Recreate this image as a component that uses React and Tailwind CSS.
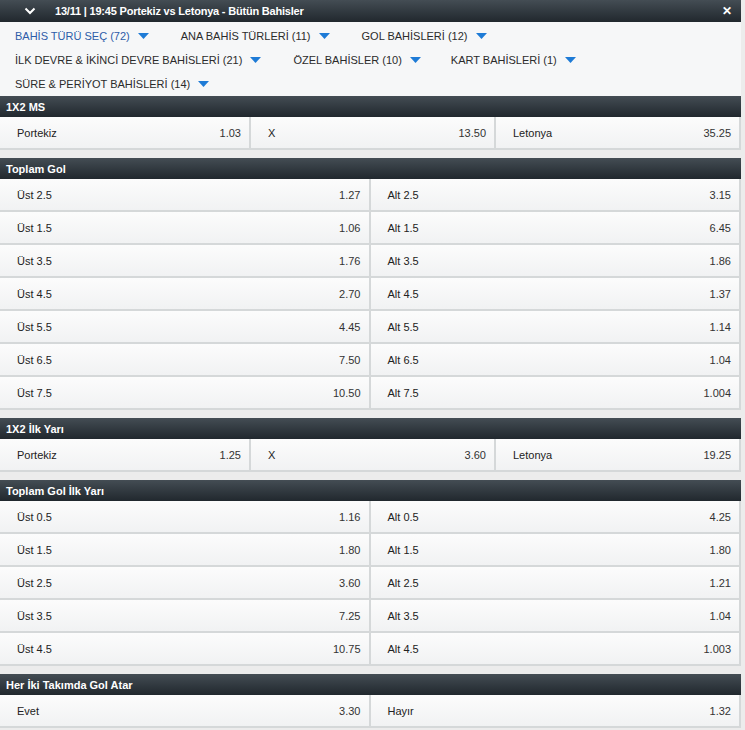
import React from "react";

const filters = [
  { t: "BAHİS TÜRÜ SEÇ (72)", active: true },
  { t: "ANA BAHİS TÜRLERİ (11)" },
  { t: "GOL BAHİSLERİ (12)" },
  { t: "İLK DEVRE & İKİNCİ DEVRE BAHİSLERİ (21)" },
  { t: "ÖZEL BAHİSLER (10)" },
  { t: "KART BAHİSLERİ (1)" },
  { t: "SÜRE & PERİYOT BAHİSLERİ (14)" },
];

const sections = [
  { title: "1X2 MS", cols: 3, cells: [["Portekiz", "1.03"], ["X", "13.50"], ["Letonya", "35.25"]] },
  {
    title: "Toplam Gol",
    cols: 2,
    cells: [
      ["Üst 2.5", "1.27"], ["Alt 2.5", "3.15"],
      ["Üst 1.5", "1.06"], ["Alt 1.5", "6.45"],
      ["Üst 3.5", "1.76"], ["Alt 3.5", "1.86"],
      ["Üst 4.5", "2.70"], ["Alt 4.5", "1.37"],
      ["Üst 5.5", "4.45"], ["Alt 5.5", "1.14"],
      ["Üst 6.5", "7.50"], ["Alt 6.5", "1.04"],
      ["Üst 7.5", "10.50"], ["Alt 7.5", "1.004"],
    ],
  },
  { title: "1X2 İlk Yarı", cols: 3, cells: [["Portekiz", "1.25"], ["X", "3.60"], ["Letonya", "19.25"]] },
  {
    title: "Toplam Gol İlk Yarı",
    cols: 2,
    cells: [
      ["Üst 0.5", "1.16"], ["Alt 0.5", "4.25"],
      ["Üst 1.5", "1.80"], ["Alt 1.5", "1.80"],
      ["Üst 2.5", "3.60"], ["Alt 2.5", "1.21"],
      ["Üst 3.5", "7.25"], ["Alt 3.5", "1.04"],
      ["Üst 4.5", "10.75"], ["Alt 4.5", "1.003"],
    ],
  },
  { title: "Her İki Takımda Gol Atar", cols: 2, cells: [["Evet", "3.30"], ["Hayır", "1.32"]] },
];

function Caret() {
  return (
    <svg width="11" height="6" viewBox="0 0 11 6" className="ml-[8px] shrink-0">
      <path d="M0 0 L11 0 L5.5 6 Z" fill="#1e7bd6" />
    </svg>
  );
}

export default function App() {
  return (
    <div className="min-h-screen bg-[#ececec] text-[11px] leading-none" style={{ fontFamily: '"Liberation Sans", Arial, sans-serif' }}>
      <div className="w-[741px]">
        <div className="h-[22px] flex items-center bg-gradient-to-b from-[#444d54] to-[#21282e] text-white font-bold">
          <svg width="12" height="8" viewBox="0 0 12 8" className="ml-[24px] mr-[19px]">
            <path d="M1.5 1.5 L6 6 L10.5 1.5" stroke="#fff" strokeWidth="2" fill="none" />
          </svg>
          <span className="tracking-[-0.2px] pt-[1px]">13/11 | 19:45 Portekiz vs Letonya - Bütün Bahisler</span>
          <span className="ml-auto mr-[9px] text-[12px]">✕</span>
        </div>
        <div className="bg-[#f6f7f8] pt-[2px] pl-[15px] flex flex-wrap h-[74px] content-start">
          {filters.map((f, i) => (
            <div key={f.t} className={i === 4 ? "h-[24px] flex items-center mr-[30px]" : "h-[24px] flex items-center mr-[32px]"}>
              <span className={f.active ? "text-[#2d5ca8] pt-[1px]" : "text-[#2b2b2b] pt-[1px]"}>{f.t}</span>
              <Caret />
            </div>
          ))}
        </div>
        {sections.map((s, i) => (
          <div key={s.title} className={i === 0 ? "" : "mt-[8px]"}>
            <div className="h-[21px] flex items-center pl-[6px] pt-[1px] bg-gradient-to-b from-[#444d54] to-[#21282e] text-white font-bold">
              {s.title}
            </div>
            <div className={s.cols === 3 ? "grid grid-cols-[251px_245px_245px]" : "grid grid-cols-2"}>
              {s.cells.map(([l, o], j) => (
                <div
                  key={j}
                  className="h-[33px] flex items-center justify-between pl-[17px] pr-[8px] pt-[2px] border-r-2 border-b-2 border-[#d5d8d9] bg-gradient-to-b from-[#fcfcfc] to-[#f1f2f3] text-[#222]"
                >
                  <span>{l}</span>
                  <span className="text-[#333]">{o}</span>
                </div>
              ))}
            </div>
          </div>
        ))}
      </div>
    </div>
  );
}
